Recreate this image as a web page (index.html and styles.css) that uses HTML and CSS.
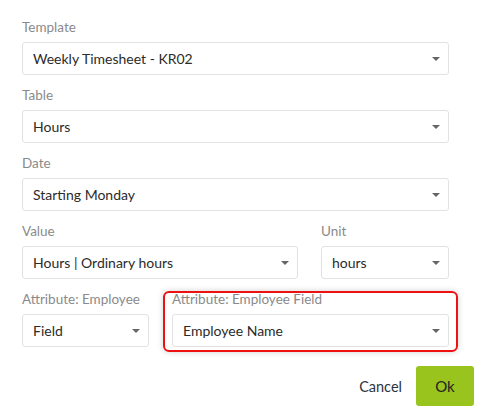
FILE: index.html
```html
<html>
<head>
    <link rel="stylesheet" href="styles.css">
</head>
<body>
    <div class="dialog">
        <div class="field">
            <label class="field-label">Template</label>
            <div class="select"><span>Weekly Timesheet - KR02</span><i class="caret"></i></div>
        </div>
        <div class="field">
            <label class="field-label">Table</label>
            <div class="select"><span>Hours</span><i class="caret"></i></div>
        </div>
        <div class="field">
            <label class="field-label">Date</label>
            <div class="select"><span>Starting Monday</span><i class="caret"></i></div>
        </div>
        <div class="row row-value">
            <div class="field">
                <label class="field-label">Value</label>
                <div class="select"><span>Hours | Ordinary hours</span><i class="caret"></i></div>
            </div>
            <div class="field">
                <label class="field-label">Unit</label>
                <div class="select"><span>hours</span><i class="caret"></i></div>
            </div>
        </div>
        <div class="row row-attr">
            <div class="field">
                <label class="field-label">Attribute: Employee</label>
                <div class="select"><span>Field</span><i class="caret"></i></div>
            </div>
            <div class="field highlighted">
                <label class="field-label">Attribute: Employee Field</label>
                <div class="select"><span>Employee Name</span><i class="caret"></i></div>
            </div>
        </div>
    </div>
    <div class="footer">
        <a class="btn-link" href="#">Cancel</a>
        <button class="btn-ok">Ok</button>
    </div>
</body>
</html>
```

FILE: styles.css
```css
body {
    margin: 0;
    background: #fff;
    font-family: Lato, "Open Sans", sans-serif;
}
.dialog {
    padding: 17px 0 0 22px;
    width: 427px;
}
.field {
    margin-bottom: 10px;
}
.field-label {
    display: block;
    height: 20px;
    line-height: 21px;
    margin-bottom: 5px;
    font-size: 13.5px;
    color: #8a8a8a;
}
.select {
    position: relative;
    box-sizing: border-box;
    height: 33px;
    border: 1px solid #e2e2e2;
    border-radius: 3px;
    padding: 0 30px 0 10px;
    font-size: 14px;
    line-height: 31px;
    color: #2b2b2b;
    background: #fff;
}
.caret {
    position: absolute;
    right: 8px;
    top: 14px;
    width: 0;
    height: 0;
    border-left: 4.5px solid transparent;
    border-right: 4.5px solid transparent;
    border-top: 4.5px solid #666;
}
.row {
    display: grid;
    column-gap: 23px;
}
.row-value {
    grid-template-columns: 1fr 128px;
}
.row-attr {
    grid-template-columns: 127px 1fr;
}
.highlighted {
    position: relative;
}
.highlighted::after {
    content: "";
    position: absolute;
    top: 2px;
    bottom: -5px;
    left: -9px;
    right: -9px;
    border: 2px solid #ee1111;
    border-radius: 6px;
    box-shadow: 0 0 6px rgba(0, 0, 0, 0.18);
    pointer-events: none;
}
.footer {
    display: flex;
    justify-content: flex-end;
    align-items: center;
    padding: 9px 5px 0 0;
}
.btn-link {
    color: #2c3440;
    text-decoration: none;
    font-size: 14.5px;
    margin-right: 14px;
}
.btn-ok {
    width: 58px;
    height: 40px;
    border: none;
    border-radius: 3px;
    background: #99c31d;
    color: #222;
    font-family: Lato, "Open Sans", sans-serif;
    font-size: 15px;
}
```
